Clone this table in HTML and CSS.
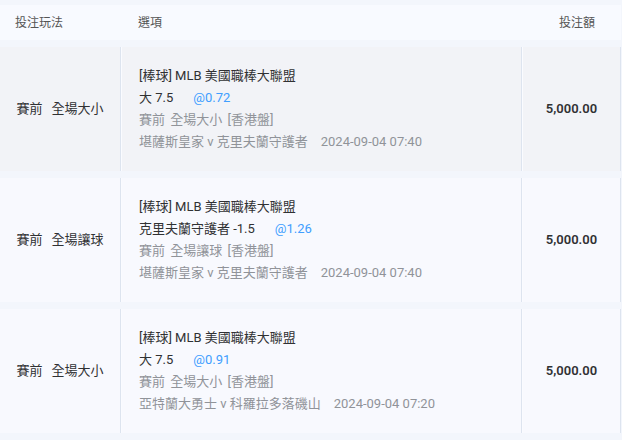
FILE: index.html
```html
<!DOCTYPE html>
<html lang="zh-Hant">
<head>
    <meta charset="UTF-8"/>
    <meta name="viewport" content="width=device-width, initial-scale=1.0"/>
    <title>投注紀錄</title>
    <link rel="stylesheet" href="styles.css">
</head>
<body>
<div id="bet-table">
    <div class="head-row">
        <div class="head-cell">投注玩法</div>
        <div class="head-cell">選項</div>
        <div class="head-cell amount-head">投注額</div>
    </div>

    <div class="bet-row active">
        <div class="cell play">
            <span class="stage">賽前</span><span>全場大小</span>
        </div>
        <div class="cell option">
            <div>[棒球] MLB 美國職棒大聯盟</div>
            <div>大 7.5<span class="odds">@0.72</span></div>
            <div class="muted info">賽前 全場大小 [香港盤]</div>
            <div class="muted">堪薩斯皇家 v 克里夫蘭守護者<span class="time">2024-09-04 07:40</span></div>
        </div>
        <div class="cell amount">5,000.00</div>
    </div>

    <div class="bet-row">
        <div class="cell play">
            <span class="stage">賽前</span><span>全場讓球</span>
        </div>
        <div class="cell option">
            <div>[棒球] MLB 美國職棒大聯盟</div>
            <div>克里夫蘭守護者 -1.5<span class="odds">@1.26</span></div>
            <div class="muted info">賽前 全場讓球 [香港盤]</div>
            <div class="muted">堪薩斯皇家 v 克里夫蘭守護者<span class="time">2024-09-04 07:40</span></div>
        </div>
        <div class="cell amount">5,000.00</div>
    </div>

    <div class="bet-row">
        <div class="cell play">
            <span class="stage">賽前</span><span>全場大小</span>
        </div>
        <div class="cell option">
            <div>[棒球] MLB 美國職棒大聯盟</div>
            <div>大 7.5<span class="odds">@0.91</span></div>
            <div class="muted info">賽前 全場大小 [香港盤]</div>
            <div class="muted">亞特蘭大勇士 v 科羅拉多落磯山<span class="time">2024-09-04 07:20</span></div>
        </div>
        <div class="cell amount">5,000.00</div>
    </div>
</div>
</body>
</html>
```

FILE: styles.css
```css
body {
    margin: 0;
    padding: 0;
    background-color: #f3f6fc;
    font-family: Roboto, "Noto Sans CJK TC", sans-serif;
    color: #303133;
}

#bet-table {
    width: 621px;
    padding-top: 5px;
    display: flex;
    flex-direction: column;
    gap: 7px;
}

.head-row,
.bet-row {
    display: grid;
    grid-template-columns: 121px 400px 98px;
    column-gap: 1px;
}

.head-row {
    height: 35px;
    align-items: center;
    background-color: #f8faff;
    font-size: 12px;
    color: #555;
}

.head-cell {
    padding-left: 15px;
    padding-bottom: 3px;
}

.head-cell:nth-child(2) {
    padding-left: 16px;
}

.head-cell.amount-head {
    padding-left: 0;
    padding-right: 26px;
    text-align: right;
}

.bet-row {
    background-color: #fafbff;
    font-size: 13px;
    line-height: 22px;
}

.cell {
    box-sizing: border-box;
    background-color: #f8f9fe;
    border-right: 1px solid #dde4ef;
    display: flex;
    align-items: center;
}

.bet-row.active .cell {
    background-color: #f2f3f7;
}

.cell.play {
    justify-content: center;
}

.cell.play .stage {
    margin-right: 9px;
}

.cell.option {
    flex-direction: column;
    align-items: flex-start;
    justify-content: center;
    padding: 18px 16px 18px 17px;
}

.odds {
    margin-left: 20px;
    color: #409eff;
}

.muted {
    color: #909399;
}

.info {
    word-spacing: 2px;
}

.time {
    margin-left: 13px;
}

.cell.amount {
    justify-content: center;
    font-weight: 600;
}
```
